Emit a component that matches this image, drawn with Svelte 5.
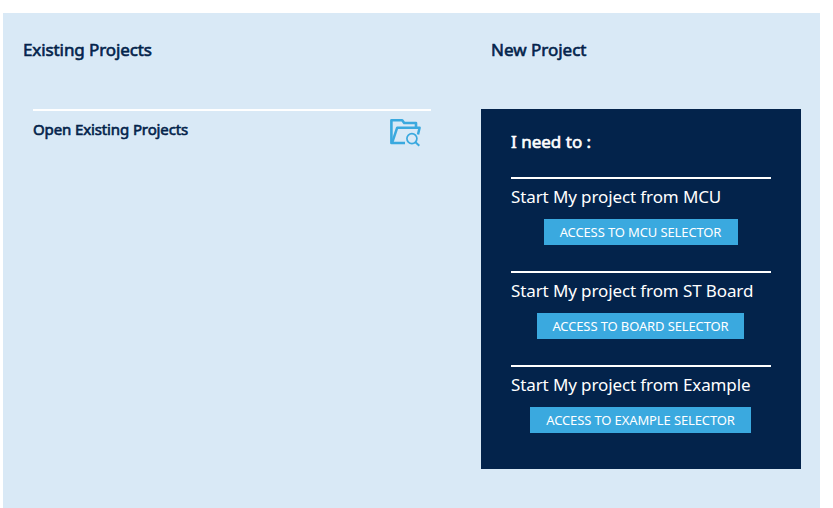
<script>
  const starters = [
    { title: 'Start My project from MCU', action: 'ACCESS TO MCU SELECTOR', width: 194 },
    { title: 'Start My project from ST Board', action: 'ACCESS TO BOARD SELECTOR', width: 207 },
    { title: 'Start My project from Example', action: 'ACCESS TO EXAMPLE SELECTOR', width: 221 }
  ];
</script>

<main>
  <section class="existing">
    <h2>Existing Projects</h2>
    <div class="open">
      <span class="label">Open Existing Projects</span>
      <svg width="32" height="30" viewBox="0 0 32 30" fill="none" stroke="#3aa9df" stroke-linejoin="round">
        <path d="M16 26H2.4V3.3H13.2L15.2 6H27V10" stroke-width="2.6" />
        <path d="M3.2 25.5L8.2 10.7H30.6L29 17.5" stroke-width="2.5" />
        <circle cx="22.9" cy="21.6" r="5" stroke-width="1.7" />
        <path d="M26.5 25.2L30.3 28.8" stroke-width="2" />
      </svg>
    </div>
  </section>
  <section class="new">
    <h2>New Project</h2>
    <div class="card">
      <h3>I need to :</h3>
      {#each starters as s}
        <div class="starter">
          <p>{s.title}</p>
          <button style="width: {s.width}px">{s.action}</button>
        </div>
      {/each}
    </div>
  </section>
</main>

<style>
  :global(body) { margin: 0; background: #fff; overflow: hidden; }
  main {
    box-sizing: border-box;
    width: 817px;
    height: 495px;
    margin: 13px 0 0 3px;
    display: flex;
    background: #d9e9f6;
    color: #03234b;
    font-family: "Noto Sans", sans-serif;
  }
  h2, h3, p { margin: 0; font-weight: 400; white-space: nowrap; }
  h2, h3, .label { -webkit-text-stroke: 0.6px currentColor; }
  h2 { height: 24px; line-height: 24px; font-size: 17px; letter-spacing: -0.1px; }
  .existing { width: 408px; padding: 25px 0 0 20px; }
  .open {
    display: flex;
    justify-content: space-between;
    width: 398px;
    margin: 47px 0 0 10px;
    border-top: 2px solid #fff;
  }
  .label { margin-top: 8px; font-size: 15px; line-height: 20px; letter-spacing: -0.12px; }
  .open svg { margin: 6px 10px 0 0; }
  .new { margin-left: 50px; padding-top: 25px; }
  .new h2 { margin-left: 10px; letter-spacing: 0; }
  .card {
    box-sizing: border-box;
    width: 320px;
    height: 360px;
    margin-top: 47px;
    padding: 21px 30px 0;
    background: #03234b;
    color: #fff;
  }
  h3 { height: 24px; margin-bottom: 23px; line-height: 24px; font-size: 17px; letter-spacing: 0; }
  .starter { height: 94px; box-sizing: border-box; padding-right: 1px; border-top: 2px solid #fff; }
  .starter p { height: 24px; padding-top: 6px; line-height: 24px; font-size: 17px; letter-spacing: -0.11px; }
  button {
    display: block;
    height: 26px;
    margin: 10px auto 0;
    padding: 0;
    border: 0;
    background: #3aa9df;
    color: #fff;
    font: 13px/26px "Noto Sans", sans-serif;
    letter-spacing: -0.12px;
    white-space: nowrap;
  }
</style>
